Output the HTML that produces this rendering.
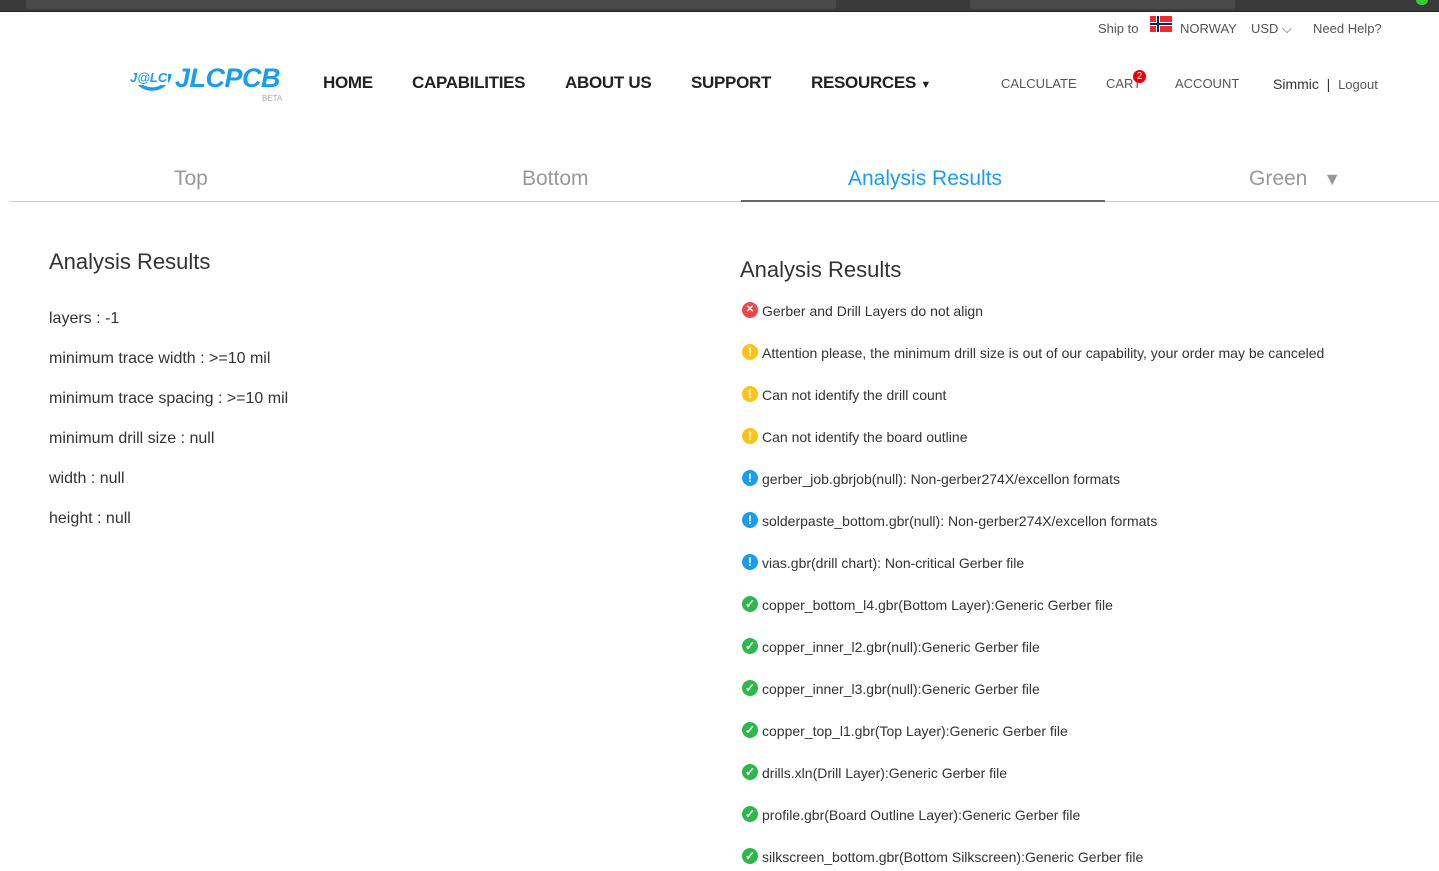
<!DOCTYPE html>
<html><head><meta charset="utf-8"><style>
*{margin:0;padding:0;box-sizing:border-box}
body{width:1439px;height:871px;overflow:hidden;background:#fff;font-family:"Liberation Sans",sans-serif;position:relative;color:#333}
.a{position:absolute;white-space:nowrap}
.nav{font-weight:bold;font-size:17px;color:#222;top:73px;letter-spacing:-0.3px}
.sm{font-size:13px;color:#555;top:76px}
.tab{font-size:21px;color:#999;top:167px}
.l{font-size:16px;color:#333;left:49px}
.r{font-size:14px;color:#333;left:762px}
.ic{position:absolute;left:742px;width:16px;height:16px;border-radius:50%;color:#fff;font-size:12px;font-weight:bold;text-align:center;line-height:16px}
</style></head><body>
<div class="a" style="left:0;top:0;width:1439px;height:12px;background:#3a3a3a;border-bottom:1px solid #222"></div>
<div class="a" style="left:26px;top:0;width:810px;height:9px;background:#4a4a4a;border-radius:0 0 3px 3px"></div>
<div class="a" style="left:970px;top:0;width:265px;height:9px;background:#4a4a4a;border-radius:0 0 3px 3px"></div>
<div class="a" style="left:1416px;top:0;width:12px;height:5px;background:#3c3;border-radius:0 0 6px 6px"></div>

<div class="a" style="left:1098px;top:21px;font-size:13px;color:#555">Ship to</div>
<svg class="a" style="left:1149px;top:16px" width="24" height="16" viewBox="0 0 22 16"><rect width="22" height="16" fill="#ef2b2d"/><rect x="6" width="4" height="16" fill="#fff"/><rect y="6" width="22" height="4" fill="#fff"/><rect x="7" width="2" height="16" fill="#002868"/><rect y="7" width="22" height="2" fill="#002868"/></svg>
<div class="a" style="left:1180px;top:21px;font-size:13px;color:#555">NORWAY</div>
<div class="a" style="left:1251px;top:21px;font-size:13px;color:#555">USD ⌵</div>
<div class="a" style="left:1313px;top:21px;font-size:13px;color:#555">Need Help?</div>

<svg class="a" style="left:126px;top:62px" width="50" height="36" viewBox="0 0 50 36"><path d="M8 8 A16 15 0 1 0 44 12" fill="none" stroke="#1a9cf0" stroke-width="3.5"/></svg>
<div class="a" style="left:129px;top:70px;font-size:13px;font-weight:bold;font-style:italic;color:#1a9cf0;background:#fff;padding:0 1px">J@LC</div>
<div class="a" style="left:175px;top:63px;font-size:27px;font-weight:bold;font-style:italic;color:#1a9cf0;letter-spacing:-0.5px">JLCPCB</div>
<div class="a" style="left:262px;top:94px;font-size:8px;color:#aaa">BETA</div>

<div class="a nav" style="left:323px">HOME</div>
<div class="a nav" style="left:412px">CAPABILITIES</div>
<div class="a nav" style="left:565px">ABOUT US</div>
<div class="a nav" style="left:691px">SUPPORT</div>
<div class="a nav" style="left:811px">RESOURCES <span style="font-size:11px">▼</span></div>
<div class="a sm" style="left:1001px">CALCULATE</div>
<div class="a sm" style="left:1106px">CART</div>
<div class="a" style="left:1133px;top:70px;width:13px;height:13px;border-radius:50%;background:#e00;color:#fff;font-size:10px;text-align:center;line-height:13px">2</div>
<div class="a sm" style="left:1175px">ACCOUNT</div>
<div class="a" style="left:1273px;top:76px;font-size:14px;color:#333">Simmic &nbsp;|&nbsp; <span style="font-size:13px;color:#555">Logout</span></div>

<div class="a tab" style="left:174px">Top</div>
<div class="a tab" style="left:522px">Bottom</div>
<div class="a tab" style="left:848px;color:#1a9cf0">Analysis Results</div>
<div class="a tab" style="left:1249px">Green <span style="font-size:18px;margin-left:10px">▼</span></div>
<div class="a" style="left:9px;top:201px;width:1430px;height:1px;background:#ccc"></div>
<div class="a" style="left:741px;top:200px;width:364px;height:2px;background:#666"></div>

<div class="a" style="left:49px;top:249px;font-size:22px;color:#333">Analysis Results</div>
<div class="a l" style="top:310px">layers : -1</div>
<div class="a l" style="top:350px">minimum trace width : &gt;=10 mil</div>
<div class="a l" style="top:390px">minimum trace spacing : &gt;=10 mil</div>
<div class="a l" style="top:430px">minimum drill size : null</div>
<div class="a l" style="top:470px">width : null</div>
<div class="a l" style="top:510px">height : null</div>

<div class="a" style="left:740px;top:257px;font-size:22px;color:#333">Analysis Results</div>

<div class="ic" style="top:302px;background:#f04848;font-size:10px">✕</div><div class="a r" style="top:303px">Gerber and Drill Layers do not align</div>
<div class="ic" style="top:344px;background:#fcc419">!</div><div class="a r" style="top:345px">Attention please, the minimum drill size is out of our capability, your order may be canceled</div>
<div class="ic" style="top:386px;background:#fcc419">!</div><div class="a r" style="top:387px">Can not identify the drill count</div>
<div class="ic" style="top:428px;background:#fcc419">!</div><div class="a r" style="top:429px">Can not identify the board outline</div>
<div class="ic" style="top:470px;background:#1a9cf0">!</div><div class="a r" style="top:471px">gerber_job.gbrjob(null): Non-gerber274X/excellon formats</div>
<div class="ic" style="top:512px;background:#1a9cf0">!</div><div class="a r" style="top:513px">solderpaste_bottom.gbr(null): Non-gerber274X/excellon formats</div>
<div class="ic" style="top:554px;background:#1a9cf0">!</div><div class="a r" style="top:555px">vias.gbr(drill chart): Non-critical Gerber file</div>
<div class="ic" style="top:596px;background:#2db84d">✓</div><div class="a r" style="top:597px">copper_bottom_l4.gbr(Bottom Layer):Generic Gerber file</div>
<div class="ic" style="top:638px;background:#2db84d">✓</div><div class="a r" style="top:639px">copper_inner_l2.gbr(null):Generic Gerber file</div>
<div class="ic" style="top:680px;background:#2db84d">✓</div><div class="a r" style="top:681px">copper_inner_l3.gbr(null):Generic Gerber file</div>
<div class="ic" style="top:722px;background:#2db84d">✓</div><div class="a r" style="top:723px">copper_top_l1.gbr(Top Layer):Generic Gerber file</div>
<div class="ic" style="top:764px;background:#2db84d">✓</div><div class="a r" style="top:765px">drills.xln(Drill Layer):Generic Gerber file</div>
<div class="ic" style="top:806px;background:#2db84d">✓</div><div class="a r" style="top:807px">profile.gbr(Board Outline Layer):Generic Gerber file</div>
<div class="ic" style="top:848px;background:#2db84d">✓</div><div class="a r" style="top:849px">silkscreen_bottom.gbr(Bottom Silkscreen):Generic Gerber file</div>
</body></html>
